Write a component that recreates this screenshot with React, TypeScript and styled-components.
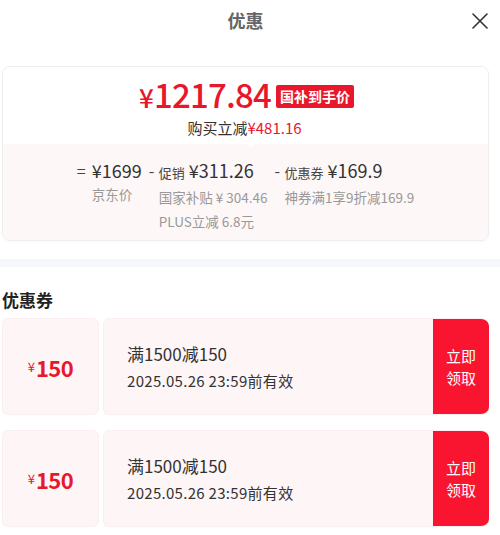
import React from "react";
import styled, { createGlobalStyle } from "styled-components";

const GlobalStyle = createGlobalStyle`
  html, body { margin: 0; padding: 0; background: #fff; }
  body {
    font-family: "Noto Sans CJK SC", "Noto Sans", sans-serif;
    color: #333;
    width: 500px;
    overflow: hidden;
  }
`;

const RED = "#e8172c";

const Page = styled.div`
  width: 500px;
  display: flex;
  flex-direction: column;
`;

const Inner = styled.div`
  padding: 0 11px 0 2px;
  display: flex;
  flex-direction: column;
`;

const Header = styled.div`
  position: relative;
  height: 40px;
  display: flex;
  align-items: center;
  justify-content: center;
`;

const Title = styled.div`
  font-size: 18px;
  font-weight: 700;
  color: #666;
  line-height: 24px;
`;

const Close = styled.button`
  position: absolute;
  right: 0;
  top: 12px;
  width: 18px;
  height: 18px;
  padding: 0;
  border: none;
  background: none;
  display: flex;
  align-items: center;
  justify-content: center;
`;

const Card = styled.div`
  margin-top: 26px;
  border: 1px solid #eeeeee;
  border-radius: 8px;
  overflow: hidden;
  box-shadow: 0 1px 3px rgba(0, 0, 0, 0.03);
  display: flex;
  flex-direction: column;
`;

const CardTop = styled.div`
  position: relative;
  height: 77px;
  background: #fff;
  display: flex;
  flex-direction: column;
  align-items: center;
  padding-top: 13px;
  box-sizing: border-box;
  &::after {
    content: "";
    position: absolute;
    left: 244px;
    bottom: -4px;
    width: 0;
    height: 0;
    border-left: 4px solid transparent;
    border-right: 4px solid transparent;
    border-top: 4px solid #fff;
    z-index: 1;
  }
`;

const PriceRow = styled.div`
  display: flex;
  align-items: center;
  gap: 5px;
  height: 30px;
  margin-left: 2px;
`;

const BigPrice = styled.div`
  color: ${RED};
  font-weight: 500;
  font-size: 33px;
  line-height: 30px;
  letter-spacing: -0.8px;
  display: flex;
  align-items: baseline;
`;

const Yen = styled.span<{ $size: number }>`
  font-size: ${(p) => p.$size}px;
  margin-right: 1px;
`;

const Badge = styled.span`
  background: ${RED};
  color: #fff;
  font-size: 14px;
  font-weight: 700;
  line-height: 23px;
  padding: 0 4px;
  border-radius: 2px;
  margin-top: 2px;
`;

const SaveLine = styled.div`
  margin-top: 8px;
  font-size: 15px;
  line-height: 20px;
  color: #333;
  margin-left: -2px;
`;

const RedText = styled.span`
  color: ${RED};
`;

const CardBottom = styled.div`
  background: #fdf7f7;
  height: 96px;
  display: flex;
  justify-content: center;
  padding-top: 14px;
  box-sizing: border-box;
  gap: 7px;
`;

const Group = styled.div`
  display: flex;
  align-items: flex-start;
`;

const Op = styled.span<{ $w: number }>`
  font-size: 16px;
  line-height: 24px;
  color: #444;
  width: ${(p) => p.$w}px;
  flex: none;
`;

const Col = styled.div`
  display: flex;
  flex-direction: column;
`;

const MainLine = styled.div`
  font-size: 18px;
  line-height: 24px;
  color: #333;
  white-space: nowrap;
`;

const Label = styled.span`
  font-size: 13px;
  margin-right: 4px;
  color: #444;
`;

const SubLine = styled.div`
  font-size: 13.5px;
  line-height: 24px;
  color: #999;
  white-space: nowrap;
`;

const Band = styled.div`
  margin-top: 18px;
  height: 8px;
  background: #f5f7fa;
`;

const SectionTitle = styled.div`
  margin-top: 21px;
  font-size: 17px;
  font-weight: 700;
  color: #222;
  line-height: 24px;
`;

const CouponList = styled.div`
  margin-top: 6px;
  display: flex;
  flex-direction: column;
  gap: 15px;
`;

const Coupon = styled.div`
  display: flex;
  height: 97px;
  gap: 4px;
`;

const Stub = styled.div`
  width: 97px;
  flex: none;
  background: #fdf5f6;
  border: 1px solid #faeff0;
  border-radius: 6px;
  box-sizing: border-box;
  display: flex;
  align-items: center;
  justify-content: center;
  color: ${RED};
`;

const StubAmount = styled.span`
  font-size: 22px;
  font-weight: 600;
  line-height: 28px;
  letter-spacing: -0.5px;
`;

const Body = styled.div`
  flex: 1;
  display: flex;
  background: #fdf5f6;
  border: 1px solid #faeff0;
  border-right: none;
  border-radius: 6px 8px 8px 6px;
  overflow: hidden;
`;

const Info = styled.div`
  flex: 1;
  padding-left: 23px;
  display: flex;
  flex-direction: column;
  justify-content: center;
  gap: 4px;
`;

const Rule = styled.div`
  font-size: 17px;
  line-height: 24px;
  color: #333;
`;

const Expire = styled.div`
  font-size: 15px;
  line-height: 22px;
  color: #333;
  letter-spacing: 0.3px;
`;

const Claim = styled.button`
  width: 56px;
  flex: none;
  border: none;
  background: #f91530;
  color: #fff;
  font-family: inherit;
  font-size: 15px;
  line-height: 22px;
  padding: 0;
  display: flex;
  align-items: center;
  justify-content: center;
  text-align: center;
`;

const coupons = [
  { amount: "150", rule: "满1500减150", expire: "2025.05.26 23:59前有效" },
  { amount: "150", rule: "满1500减150", expire: "2025.05.26 23:59前有效" },
];

export default function App() {
  return (
    <Page>
      <GlobalStyle />
      <Inner>
        <Header>
          <Title>优惠</Title>
          <Close aria-label="关闭">
            <svg width="16" height="16" viewBox="0 0 16 16">
              <path d="M1 1L15 15M15 1L1 15" stroke="#333" strokeWidth="1.6" strokeLinecap="round" />
            </svg>
          </Close>
        </Header>
        <Card>
          <CardTop>
            <PriceRow>
              <BigPrice>
                <Yen $size={26}>¥</Yen>1217.84
              </BigPrice>
              <Badge>国补到手价</Badge>
            </PriceRow>
            <SaveLine>
              购买立减<RedText>¥481.16</RedText>
            </SaveLine>
          </CardTop>
          <CardBottom>
            <Group>
              <Op $w={15}>=</Op>
              <Col>
                <MainLine>¥1699</MainLine>
                <SubLine>京东价</SubLine>
              </Col>
            </Group>
            <Group>
              <Op $w={10}>-</Op>
              <Col>
                <MainLine>
                  <Label>促销</Label>¥311.26
                </MainLine>
                <SubLine>国家补贴 ¥ 304.46</SubLine>
                <SubLine>PLUS立减 6.8元</SubLine>
              </Col>
            </Group>
            <Group>
              <Op $w={10}>-</Op>
              <Col>
                <MainLine>
                  <Label>优惠券</Label>¥169.9
                </MainLine>
                <SubLine>神券满1享9折减169.9</SubLine>
              </Col>
            </Group>
          </CardBottom>
        </Card>
      </Inner>
      <Band />
      <Inner>
        <SectionTitle>优惠券</SectionTitle>
        <CouponList>
          {coupons.map((c, i) => (
            <Coupon key={i}>
              <Stub>
                <Yen $size={13}>¥</Yen>
                <StubAmount>{c.amount}</StubAmount>
              </Stub>
              <Body>
                <Info>
                  <Rule>{c.rule}</Rule>
                  <Expire>{c.expire}</Expire>
                </Info>
                <Claim>
                  立即
                  <br />
                  领取
                </Claim>
              </Body>
            </Coupon>
          ))}
        </CouponList>
      </Inner>
    </Page>
  );
}
